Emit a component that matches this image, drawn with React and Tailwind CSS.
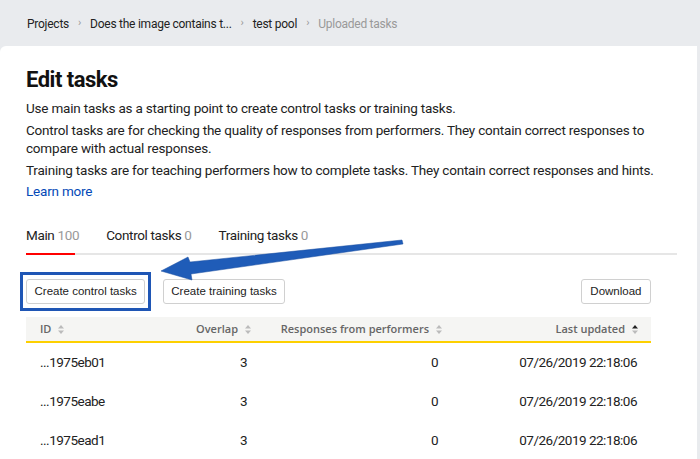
import React from 'react';

const ROWS = [
  { id: '...1975eb01', overlap: 3, responses: 0, updated: '07/26/2019 22:18:06' },
  { id: '...1975eabe', overlap: 3, responses: 0, updated: '07/26/2019 22:18:06' },
  { id: '...1975ead1', overlap: 3, responses: 0, updated: '07/26/2019 22:18:06' },
];

function SortIcon({ active }) {
  return (
    <svg width="6" height="9" viewBox="0 0 6 9" className="ml-[7px] inline-block">
      <path d="M3 0 L6 3.5 H0 Z" fill={active ? '#222' : '#bbb'} />
      <path d="M3 9 L6 5.5 H0 Z" fill="#bbb" />
    </svg>
  );
}

function Crumb({ children }) {
  return <span className="text-[#222]">{children}</span>;
}

function Sep() {
  return <span className="mx-[9px] text-[11px] text-[#999]">›</span>;
}

export default function App() {
  return (
    <div className="relative h-[459px] w-[700px] overflow-hidden bg-[#e9ebee] font-['Roboto',sans-serif]">
      {/* Breadcrumbs */}
      <div className="flex h-[46px] items-center px-[27px] pt-[1px] text-[12px] tracking-[-0.25px]">
        <Crumb>Projects</Crumb>
        <Sep />
        <Crumb>Does the image contains t...</Crumb>
        <Sep />
        <Crumb>test pool</Crumb>
        <Sep />
        <span className="text-[#999]">Uploaded tasks</span>
      </div>

      {/* Card */}
      <div className="mr-[3px] h-[413px] rounded-tl-[6px] bg-white px-[26px] pt-[19px]">
        <h1 className="text-[22px] font-bold leading-[30px] tracking-[-0.5px] text-[#111]">Edit tasks</h1>
        <div className="mt-[4px] text-[13.5px] leading-[18px] tracking-[-0.2px] text-[#222]">
          <p>Use main tasks as a starting point to create control tasks or training tasks.</p>
          <p className="mt-[4px]">
            Control tasks are for checking the quality of responses from performers. They contain correct responses to
            compare with actual responses.
          </p>
          <p className="mt-[4px]">
            Training tasks are for teaching performers how to complete tasks. They contain correct responses and hints.
          </p>
          <a className="mt-[3px] block text-[#0449b7]">Learn more</a>
        </div>

        {/* Tabs */}
        <div className="mt-[25px] flex w-[651px] border-b-2 border-[#e6e6e6] text-[13.5px] tracking-[-0.35px]">
          <div className="relative pb-[8px] text-[#222]">
            Main <span className="text-[#999]">100</span>
            <div className="absolute bottom-[-2px] left-0 h-[2px] w-[49px] bg-[#ff0000]" />
          </div>
          <div className="ml-[27px] pb-[8px] text-[#222]">
            Control tasks <span className="text-[#999]">0</span>
          </div>
          <div className="ml-[27px] pb-[8px] text-[#222]">
            Training tasks <span className="text-[#999]">0</span>
          </div>
        </div>

        {/* Buttons */}
        <div className="mt-[24px] flex w-[625px] items-center font-['Liberation_Sans',sans-serif] text-[11.5px] text-[#222]">
          <div className="relative">
            <button className="h-[25px] rounded-[3px] border border-[#d0d0d0] bg-white px-[7.5px]">Create control tasks</button>
            <div className="absolute left-[-6px] top-[-7px] h-[39px] w-[131px] border-[3px] border-[#1f56b5]" />
          </div>
          <button className="ml-[18px] h-[25px] rounded-[3px] border border-[#d0d0d0] bg-white px-[7px]">
            Create training tasks
          </button>
          <button className="ml-auto h-[25px] rounded-[3px] border border-[#d0d0d0] bg-white px-[8.5px]">Download</button>
        </div>

        {/* Table */}
        <div className="mt-[13px] w-[625px]">
          <div className="flex h-[26px] items-center border-b-2 border-[#fdd000] bg-[#f5f5f3] font-['Open_Sans',sans-serif] text-[11px] font-semibold text-[#666]">
            <div className="flex w-[155px] items-center pl-[14px]">
              ID <SortIcon />
            </div>
            <div className="flex w-[70px] items-center justify-end">
              Overlap <SortIcon />
            </div>
            <div className="flex w-[191px] items-center justify-end">
              Responses from performers <SortIcon />
            </div>
            <div className="flex flex-1 items-center justify-end pr-[13px]">
              Last updated <SortIcon active />
            </div>
          </div>
          {ROWS.map((r) => (
            <div key={r.id} className="flex h-[39px] items-center pb-[2px] text-[13.5px] tracking-[-0.5px] text-[#222]">
              <div className="w-[155px] pl-[14px]">{r.id}</div>
              <div className="w-[66px] text-right">{r.overlap}</div>
              <div className="w-[191px] text-right">{r.responses}</div>
              <div className="flex-1 pr-[14px] text-right">{r.updated}</div>
            </div>
          ))}
        </div>
      </div>

      {/* Annotation arrow */}
      <svg className="pointer-events-none absolute left-0 top-0" width="700" height="459">
        <path
          d="M402 240 L190 262 L188 257 L161 271 L192 280 L191 274 L403 244 Z"
          fill="#1f5cb8"
          stroke="#1a4fa0"
          strokeWidth="0.5"
          strokeLinejoin="round"
        />
      </svg>
    </div>
  );
}
